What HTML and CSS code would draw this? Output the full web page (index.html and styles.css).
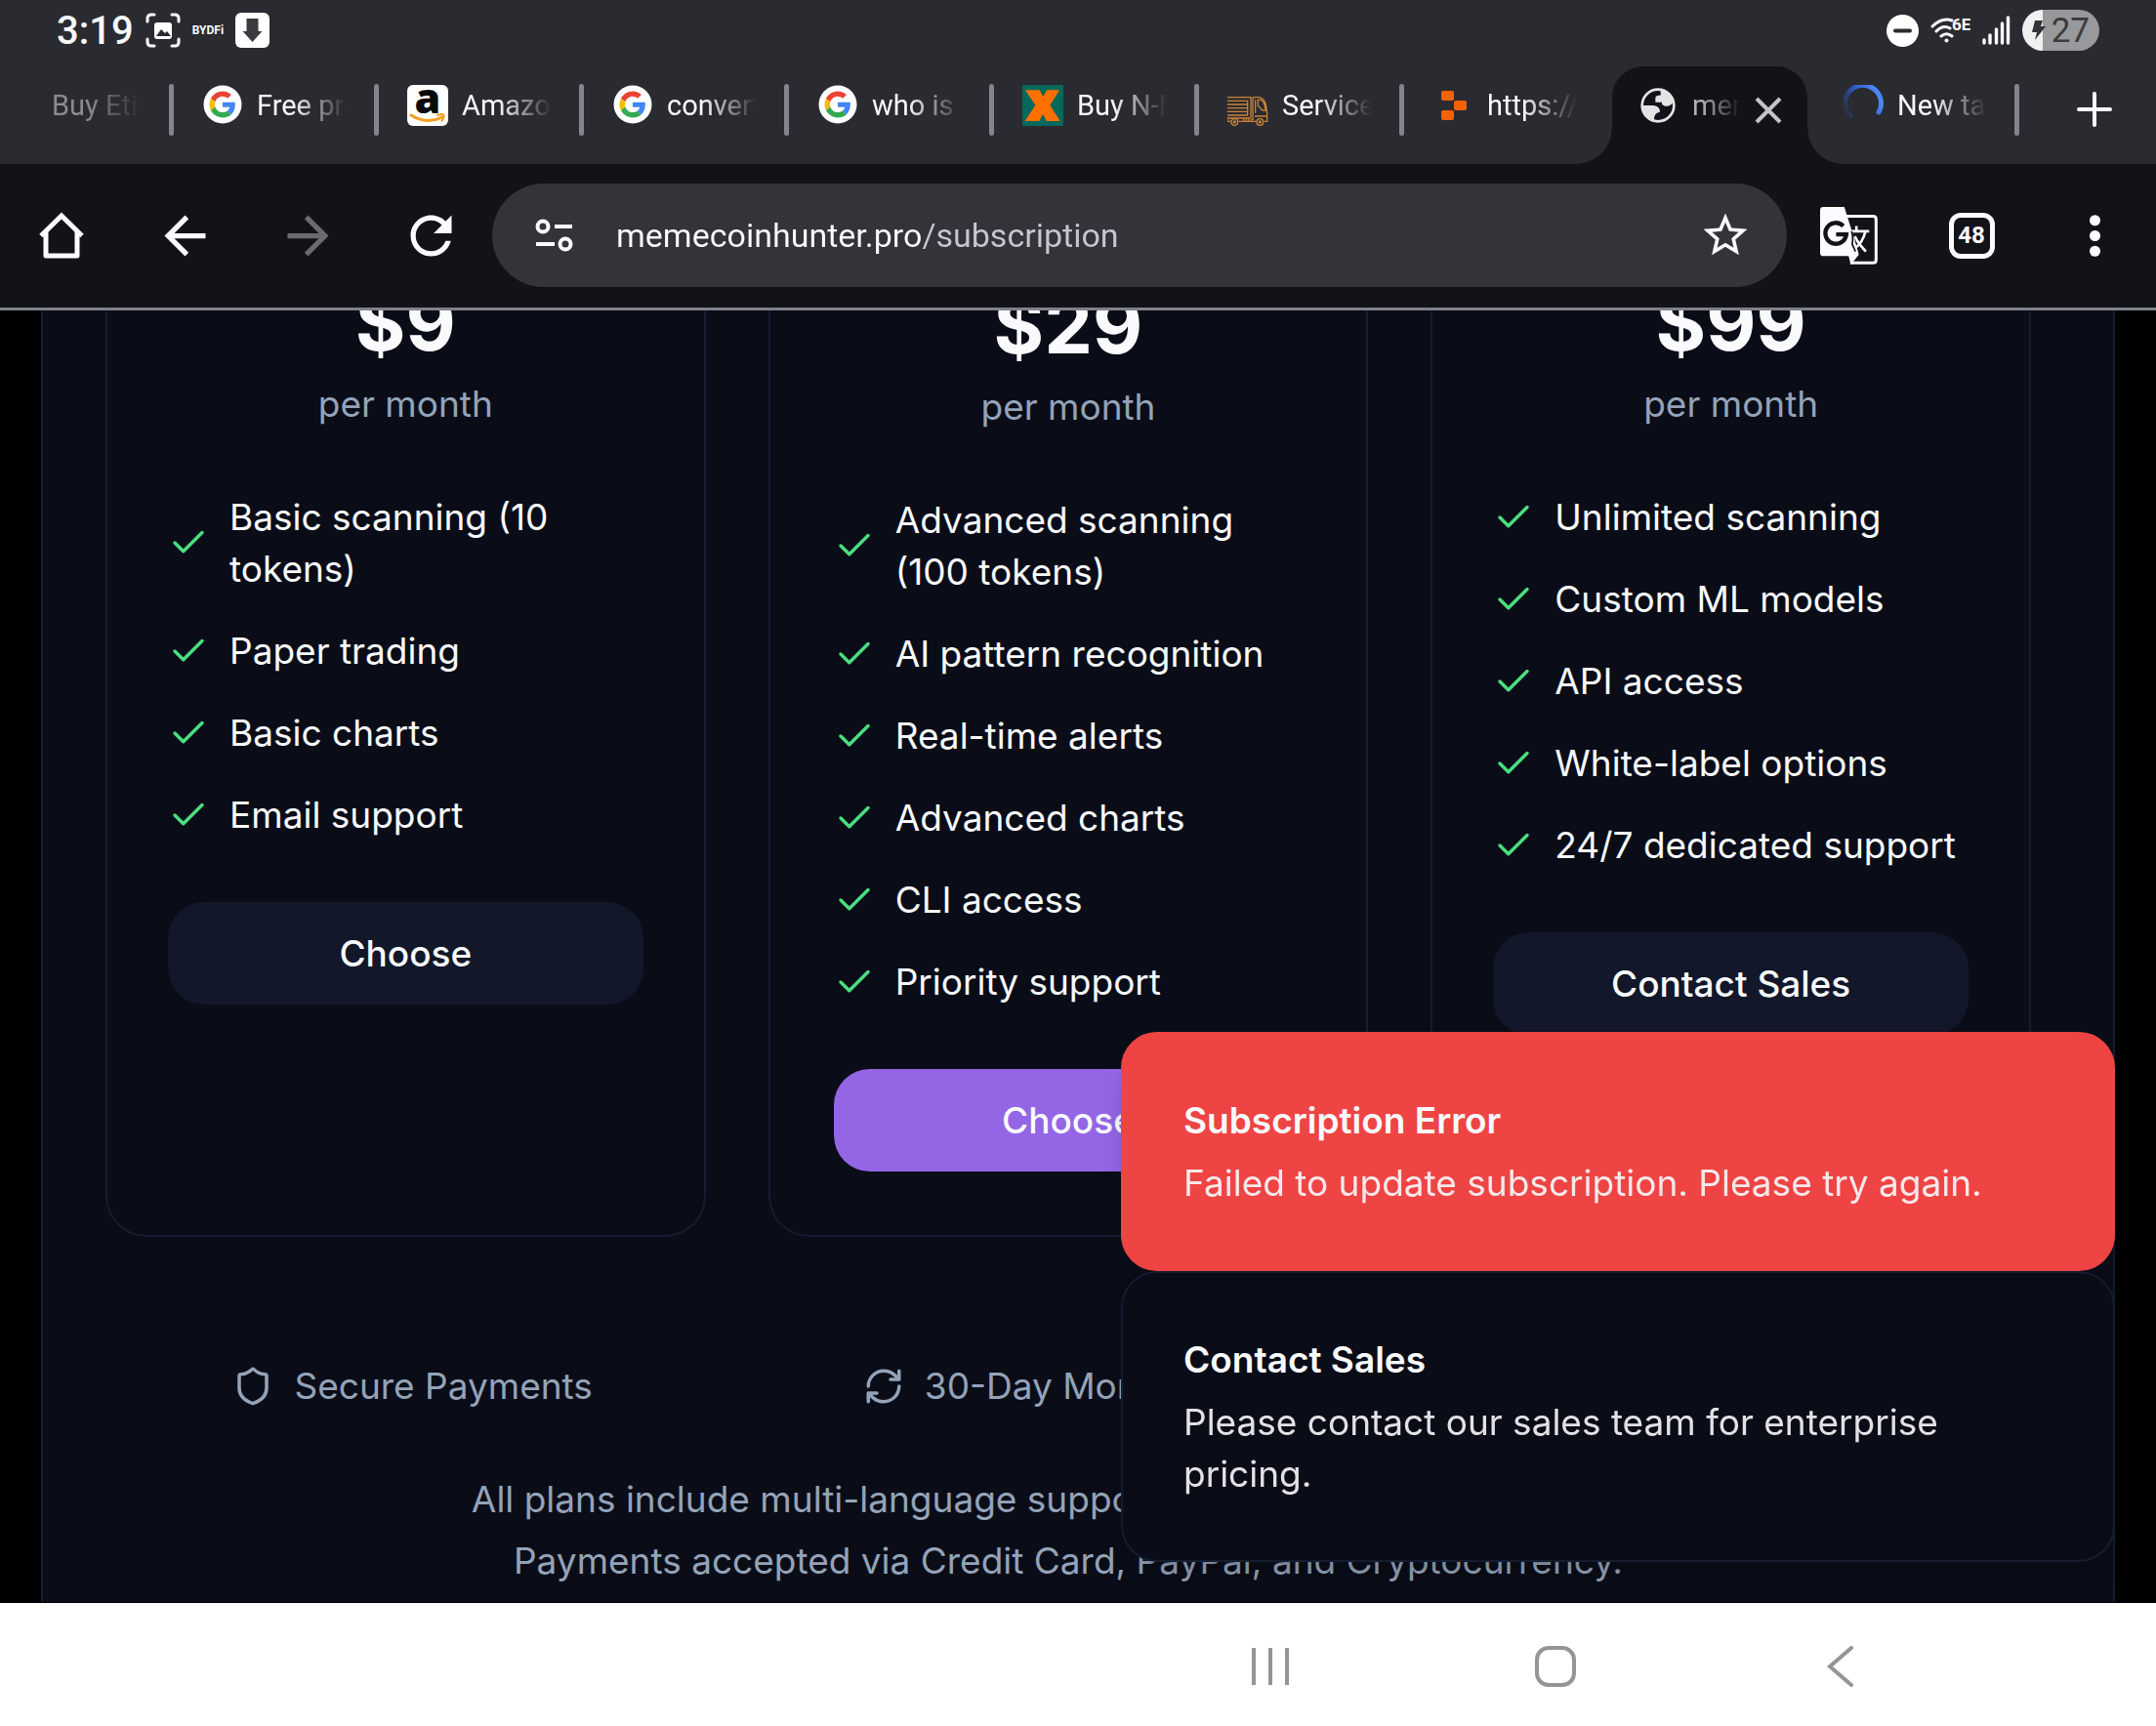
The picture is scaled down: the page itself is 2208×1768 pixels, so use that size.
FILE: index.html
```html
<!DOCTYPE html>
<html lang="en">
<head>
<meta charset="utf-8">
<meta name="viewport" content="width=device-width, initial-scale=1">
<title>Subscription</title>
<link rel="stylesheet" href="styles.css">
</head>
<body>
<svg width="0" height="0" class="defs" aria-hidden="true">
  <symbol id="google" viewBox="0 0 42 42">
    <circle cx="21" cy="20" r="19.500" fill="#fff"/>
    <g transform="translate(7.500 6.500) scale(.56)">
      <path fill="#EA4335" d="M24 9.500c3.540 0 6.710 1.220 9.210 3.600l6.850-6.850C35.900 2.380 30.470 0 24 0 14.620 0 6.510 5.380 2.560 13.220l7.980 6.190C12.430 13.720 17.740 9.500 24 9.500z"/>
      <path fill="#4285F4" d="M46.980 24.550c0-1.570-.15-3.090-.38-4.550H24v9.020h12.940c-.58 2.960-2.260 5.480-4.780 7.180l7.730 6c4.510-4.180 7.090-10.360 7.090-17.650z"/>
      <path fill="#FBBC05" d="M10.530 28.590c-.48-1.450-.76-2.990-.76-4.590s.27-3.140.76-4.590l-7.980-6.190C.92 16.460 0 20.120 0 24c0 3.880.92 7.540 2.560 10.780l7.970-6.190z"/>
      <path fill="#34A853" d="M24 48c6.480 0 11.930-2.130 15.890-5.810l-7.730-6c-2.150 1.450-4.920 2.300-8.160 2.300-6.260 0-11.570-4.220-13.470-9.910l-7.980 6.190C6.510 42.620 14.620 48 24 48z"/>
    </g>
  </symbol>
  <symbol id="check" viewBox="0 0 24 24">
    <path d="M20 6 9 17l-5-5" fill="none" stroke="currentColor" stroke-width="2" stroke-linecap="round" stroke-linejoin="round"/>
  </symbol>
</svg>

<header class="status">
  <div class="status-side">
    <time class="clock">3:19</time>
    <svg width="36" height="36" viewBox="0 0 36 36" fill="none" stroke="#fff" stroke-width="3" stroke-linecap="round">
      <path d="M2 9V6q0-4 4-4h3M27 2h3q4 0 4 4v3M34 27v3q0 4-4 4h-3M9 34H6q-4 0-4-4v-3"/>
      <rect x="9" y="10" width="18" height="17" rx="3" fill="#fff" stroke="none"/>
      <path d="M11 24l5-7 4 4 2-2 4 5z" fill="#2a2b30" stroke="none"/>
    </svg>
    <span class="carrier">BYDFi</span>
    <svg width="35" height="36" viewBox="0 0 35 36">
      <rect width="35" height="36" rx="6" fill="#fff"/>
      <path d="M11.500 6h12v13h4L17.500 30l-10-11h4z" fill="#3b3b40"/>
    </svg>
  </div>
  <div class="status-side">
    <svg width="33" height="33" viewBox="0 0 33 33">
      <circle cx="16.500" cy="16.500" r="16.500" fill="#fff"/>
      <path d="M9 16.500h15" stroke="#2a2b30" stroke-width="4" stroke-linecap="round"/>
    </svg>
    <svg class="wifi" width="41" height="28" viewBox="0 0 41 28" fill="none" stroke="#fff" stroke-width="3" stroke-linecap="round">
      <path d="M2 10Q12 .5 22 4M6 15q7-7 14-3M11 20q5.500-4.500 11 0"/>
      <circle cx="16.500" cy="24.500" r="2" fill="#fff" stroke="none"/>
      <text x="22" y="14" fill="#fff" stroke="none" font-family="Roboto, sans-serif" font-weight="700" font-size="17">6E</text>
    </svg>
    <svg class="signal" width="29" height="30" viewBox="0 0 29 30" stroke="#fff" stroke-width="3.400" stroke-linecap="round">
      <path d="M2 28v-3M8 28v-8M14.500 28V14M20.500 28V8M26.500 28V2"/>
    </svg>
    <div class="battery">
      <svg width="16" height="22" viewBox="0 0 16 22"><path d="M4 1h8l-2 6h5L4 21l2-8H1z" fill="#333438"/></svg>
      <span>27</span>
    </div>
  </div>
</header>

<nav class="tabs" aria-label="Open tabs">
  <div class="tab tab-faded"><span class="favicon"></span><button class="tab-title">Buy Etih</button></div>
  <div class="tab"><svg class="favicon"><use href="#google"/></svg><button class="tab-title">Free pro</button></div>
  <div class="tab">
    <svg class="favicon" viewBox="0 0 42 42">
      <rect width="42" height="42" rx="6" fill="#fff"/>
      <text x="21" y="29" text-anchor="middle" font-family="Open Sans, sans-serif" font-weight="800" font-size="43" fill="#0a0a0a">a</text>
      <path d="M4 31q16 10 32 2" fill="none" stroke="#f79d1e" stroke-width="3" stroke-linecap="round"/>
      <path d="M31 31q6-2 6.500 0t-2 6" fill="none" stroke="#f79d1e" stroke-width="2" stroke-linecap="round"/>
    </svg>
    <button class="tab-title">Amazon</button>
  </div>
  <div class="tab"><svg class="favicon"><use href="#google"/></svg><button class="tab-title">convert</button></div>
  <div class="tab"><svg class="favicon"><use href="#google"/></svg><button class="tab-title">who is s</button></div>
  <div class="tab">
    <svg class="favicon" viewBox="0 0 126 126">
      <path d="M0 0h126v126H0z" fill="#04685b"/>
      <path d="M9 16h44l11 20 11-20h39L85 62l31 49H74L63 90 52 111H8l32-49z" fill="#ff7000"/>
    </svg>
    <button class="tab-title">Buy N-M</button>
  </div>
  <div class="tab">
    <svg class="favicon" viewBox="0 0 126 126" fill="none" stroke="#c98437" stroke-width="4">
      <path d="M0 38h72v62M0 49h62M0 60h62M0 71h62M0 82h62M0 93h62M62 49v44M0 102h72M78 38h18q16 2 22 22l4 28v24h-10M78 38v70M86 46v40M94 46h8q8 2 12 14l4 18h-10L94 64zM84 96h36M0 100v12h10M34 112h54"/>
      <circle cx="22" cy="114" r="10"/><circle cx="100" cy="114" r="10"/>
      <circle cx="22" cy="114" r="3"/><circle cx="100" cy="114" r="3"/>
      <path d="M50 104v8M58 104v8M66 104v8M74 104v8"/>
    </svg>
    <button class="tab-title">Service</button>
  </div>
  <div class="tab tab-plain">
    <svg class="favicon" viewBox="0 0 42 42" fill="#f26207">
      <rect x="9" y="6" width="13" height="10" rx="2"/><rect x="22" y="16" width="13" height="10" rx="2"/><rect x="9" y="26" width="13" height="10" rx="2"/>
    </svg>
    <button class="tab-title">https://</button>
  </div>
  <div class="tab tab-plain tab-active">
    <svg class="favicon" viewBox="111 263 126 126">
      <circle cx="174" cy="326" r="49" fill="none" stroke="#e3e3e3" stroke-width="8"/>
      <path d="M181 277l2 17q-17 2-17 8v14h20v6q12 12 28 2l8-10q-4-30-41-37zM125 326h35q20 2 20 20-18 2-18 24l-4 4q-34-10-33-48z" fill="#e3e3e3"/>
    </svg>
    <button class="tab-title">mem</button>
    <button class="tab-close" aria-label="Close tab">
      <svg width="28" height="28" viewBox="0 0 28 28"><path d="M2 2l24 24M26 2L2 26" stroke="#c3c3c8" stroke-width="4"/></svg>
    </button>
  </div>
  <div class="tab">
    <svg class="favicon" viewBox="0 0 42 42" fill="none" stroke-width="5" stroke-linecap="round">
      <defs><linearGradient id="spin" x1="0" y1="1" x2="1" y2=".6"><stop offset="0" stop-color="#2b4f9f" stop-opacity="0"/><stop offset=".5" stop-color="#2d56bb"/><stop offset="1" stop-color="#4a86f5"/></linearGradient></defs>
      <path d="M8 32A18.500 18.500 0 1 1 37 28" stroke="url(#spin)"/>
    </svg>
    <button class="tab-title">New tab</button>
  </div>
  <button class="tab-new" aria-label="New tab">
    <svg width="36" height="36" viewBox="0 0 36 36"><path d="M18 2v32M2 18h32" stroke="#fdfbff" stroke-width="4" stroke-linecap="round"/></svg>
  </button>
</nav>

<div class="toolbar">
  <button class="tool" aria-label="Home">
    <svg width="48" height="48" viewBox="0 0 48 48" fill="none" stroke="currentColor" stroke-width="5" stroke-linejoin="round"><path d="M3 24.500L24 4l21 20.500" stroke-linejoin="miter"/><path d="M8 20v25h32V20"/></svg>
  </button>
  <button class="tool" aria-label="Back">
    <svg width="63" height="63" viewBox="0 0 24 24"><path fill="currentColor" d="M20 11H7.830l5.590-5.590L12 4l-8 8 8 8 1.410-1.410L7.830 13H20v-2z"/></svg>
  </button>
  <button class="tool tool-off" aria-label="Forward">
    <svg width="63" height="63" viewBox="0 0 24 24"><path fill="currentColor" d="M12 4l-1.410 1.410L16.170 11H4v2h12.170l-5.580 5.590L12 20l8-8z"/></svg>
  </button>
  <button class="tool" aria-label="Reload">
    <svg width="63" height="63" viewBox="0 0 24 24"><path fill="currentColor" d="M17.650 6.350C16.200 4.900 14.210 4 12 4c-4.420 0-7.990 3.580-7.990 8s3.570 8 7.990 8c3.730 0 6.840-2.550 7.730-6h-2.080c-.82 2.330-3.040 4-5.650 4-3.310 0-6-2.690-6-6s2.690-6 6-6c1.660 0 3.140.69 4.220 1.780L13 11h7V4l-2.350 2.350z"/></svg>
  </button>
  <div class="omnibox">
    <svg width="40" height="34" viewBox="0 0 40 34" fill="none" stroke="#fdfbff" stroke-width="4"><circle cx="8" cy="8" r="5.500"/><path d="M20 8h18M1 26h19"/><circle cx="31" cy="26" r="5.500"/></svg>
    <input class="url" type="text" aria-label="Address" value="memecoinhunter.pro/subscription">
    <button class="star" aria-label="Bookmark">
      <svg width="54" height="54" viewBox="0 0 24 24"><path fill="currentColor" d="M22 9.240l-7.190-.62L12 2 9.190 8.630 2 9.240l5.460 4.730L5.820 21 12 17.270 18.180 21l-1.630-7.030L22 9.240zM12 15.400l-3.760 2.270 1-4.280-3.320-2.880 4.380-.38L12 6.100l1.710 4.040 4.380.38-3.320 2.880 1 4.280L12 15.400z"/></svg>
    </button>
  </div>
  <button class="tool" aria-label="Translate">
    <svg width="59" height="59" viewBox="0 0 176 176" fill="none" stroke="currentColor">
      <path d="M76 28h86q9 0 9 9v125q0 9-9 9H92" stroke-width="9"/>
      <path d="M111 58v14M90 74h60M138 76q-8 34-34 52M106 90q10 22 34 46" stroke-width="8"/>
      <path d="M10 0h64l22 70q22 70 22 76L94 176l-7-26H10q-10 0-10-10V10Q0 0 10 0z" fill="currentColor" stroke="none"/>
      <path d="M96 74q6 20 2 40l10 22" stroke="#121318" stroke-width="5"/>
      <path d="M71 58A32 32 0 1 0 80 84H49" stroke="#121318" stroke-width="13"/>
    </svg>
  </button>
  <button class="tool" aria-label="Switch tabs"><span class="count">48</span></button>
  <button class="tool" aria-label="Menu">
    <svg width="63" height="63" viewBox="0 0 24 24" fill="currentColor"><circle cx="12" cy="6" r="2.100"/><circle cx="12" cy="12" r="2.100"/><circle cx="12" cy="18" r="2.100"/></svg>
  </button>
</div>

<main class="page">
  <section class="panel">
    <div class="plans">
      <article class="plan">
        <p class="price">$9</p>
        <p class="period">per month</p>
        <ul class="features">
          <li><svg><use href="#check"/></svg>Basic scanning (10 tokens)</li>
          <li><svg><use href="#check"/></svg>Paper trading</li>
          <li><svg><use href="#check"/></svg>Basic charts</li>
          <li><svg><use href="#check"/></svg>Email support</li>
        </ul>
        <button class="choose">Choose</button>
      </article>
      <article class="plan plan-popular">
        <p class="price">$29</p>
        <p class="period">per month</p>
        <ul class="features">
          <li><svg><use href="#check"/></svg>Advanced scanning (100 tokens)</li>
          <li><svg><use href="#check"/></svg>AI pattern recognition</li>
          <li><svg><use href="#check"/></svg>Real-time alerts</li>
          <li><svg><use href="#check"/></svg>Advanced charts</li>
          <li><svg><use href="#check"/></svg>CLI access</li>
          <li><svg><use href="#check"/></svg>Priority support</li>
        </ul>
        <button class="choose choose-primary">Choose</button>
      </article>
      <article class="plan">
        <p class="price">$99</p>
        <p class="period">per month</p>
        <ul class="features">
          <li><svg><use href="#check"/></svg>Unlimited scanning</li>
          <li><svg><use href="#check"/></svg>Custom ML models</li>
          <li><svg><use href="#check"/></svg>API access</li>
          <li><svg><use href="#check"/></svg>White-label options</li>
          <li><svg><use href="#check"/></svg>24/7 dedicated support</li>
        </ul>
        <button class="choose">Contact Sales</button>
      </article>
    </div>
    <div class="perks">
      <div class="perk">
        <svg viewBox="0 0 24 24"><path d="M20 13c0 5-3.500 7.500-7.660 8.950a1 1 0 0 1-.67-.01C7.500 20.500 4 18 4 13V6a1 1 0 0 1 1-1c2 0 4.500-1.200 6.240-2.720a1.170 1.170 0 0 1 1.520 0C14.510 3.810 17 5 19 5a1 1 0 0 1 1 1z"/></svg>
        Secure Payments
      </div>
      <div class="perk">
        <svg viewBox="0 0 24 24"><path d="M3 12a9 9 0 0 1 9-9 9.750 9.750 0 0 1 6.740 2.740L21 8M21 3v5h-5M21 12a9 9 0 0 1-9 9 9.750 9.750 0 0 1-6.740-2.740L3 16M8 16H3v5"/></svg>
        30-Day Money Back
      </div>
    </div>
    <p class="note">All plans include multi-language support and real-time market signals.</p>
    <p class="note">Payments accepted via Credit Card, PayPal, and Cryptocurrency.</p>
  </section>
  <div class="toasts">
    <div class="toast toast-error" role="alert">
      <h2>Subscription Error</h2>
      <p>Failed to update subscription. Please try again.</p>
    </div>
    <div class="toast" role="status">
      <h2>Contact Sales</h2>
      <p>Please contact our sales team for enterprise pricing.</p>
    </div>
  </div>
</main>

<footer class="system">
  <button aria-label="Recents"><svg width="42" height="42" viewBox="0 0 42 42"><path d="M4 2v38M21 2v38M38 2v38"/></svg></button>
  <button aria-label="Home screen"><svg width="42" height="42" viewBox="0 0 42 42"><rect x="2" y="2" width="38" height="38" rx="12"/></svg></button>
  <button aria-label="System back"><svg width="42" height="42" viewBox="0 0 42 42"><path d="M32 2L10 21l22 19" stroke-linecap="round"/></svg></button>
</footer>
</body>
</html>
```

FILE: styles.css
```css
* { box-sizing: border-box; }

body {
  margin: 0;
  min-height: 100vh;
  display: flex;
  flex-direction: column;
  background: #fff;
  color: #f8fafc;
  font-family: Inter, sans-serif;
  font-size: 37px;
  line-height: 53px;
}

h2, p, ul { margin: 0; padding: 0; }

button, input {
  margin: 0;
  padding: 0;
  border: 0;
  background: none;
  color: inherit;
  font: inherit;
}

svg { display: block; flex: none; }
.defs { position: absolute; }

/* status bar */
.status {
  display: flex;
  justify-content: space-between;
  height: 64px;
  padding: 0 58px 2px;
  background: #2a2b30;
  font-family: Roboto, sans-serif;
}
.status-side { display: flex; align-items: center; gap: 12px; }
.clock { font-size: 40px; font-weight: 500; }
.carrier { font-size: 12px; font-weight: 700; }
.battery {
  display: flex;
  align-items: center;
  gap: 5px;
  height: 42px;
  padding: 0 10px 0 9px;
  border-radius: 21px;
  background: linear-gradient(90deg, #f0f0f0 21px, #98999b 21px);
  color: #3a3b3f;
  font-size: 35px;
}

/* tab strip */
.tabs {
  display: flex;
  height: 104px;
  padding-top: 4px;
  background: #2a2b30;
  overflow: hidden;
  font-family: Roboto, sans-serif;
  font-size: 29px;
}
.tab {
  position: relative;
  z-index: 0;
  flex: none;
  display: flex;
  align-items: center;
  gap: 14px;
  width: 210px;
  padding: 0 0 20px 31px;
}
.tab:first-child { margin-left: -34px; }
.tab::after {
  content: "";
  position: absolute;
  right: -2px;
  bottom: 29px;
  width: 5px;
  height: 53px;
  border-radius: 3px;
  background: #83848d;
}
.tab-faded .tab-title { color: #8b8b90; }
.favicon { flex: none; width: 42px; height: 42px; }
.tab-title {
  width: 92px;
  overflow: hidden;
  white-space: nowrap;
  text-align: left;
  -webkit-mask-image: linear-gradient(90deg, #000 40%, transparent);
  mask-image: linear-gradient(90deg, #000 40%, transparent);
}
.tab-plain::after { content: none; }
.tab-active::before {
  content: "";
  position: absolute;
  z-index: -1;
  inset: 0 5px;
  border-radius: 32px 32px 0 0;
  background: #121318;
}
.tab-active::after {
  content: "";
  z-index: -1;
  left: -31px;
  right: -31px;
  bottom: 0;
  width: auto;
  height: 36px;
  border-radius: 0;
  background:
    radial-gradient(circle at 0 0, transparent 35px, #121318 36px) left / 36px 36px no-repeat,
    radial-gradient(circle at 100% 0, transparent 35px, #121318 36px) right / 36px 36px no-repeat;
}
.tab-active .tab-title {
  width: 50px;
  color: #b0b0b5;
  -webkit-mask-image: linear-gradient(90deg, #000 20%, transparent);
  mask-image: linear-gradient(90deg, #000 20%, transparent);
}
.tab-close { padding-top: 10px; }
.tab-new { flex: none; display: grid; place-items: center; width: 158px; padding-bottom: 12px; }

/* toolbar */
.toolbar {
  display: flex;
  align-items: center;
  height: 150px;
  padding-bottom: 1px;
  border-bottom: 3px solid #7f818b;
  background: #121318;
  color: #fdfbff;
}
.tool { flex: none; display: grid; place-items: center; width: 126px; height: 126px; }
.tool-off { color: #6a6a6f; }
.omnibox {
  flex: 1;
  display: flex;
  align-items: center;
  gap: 43px;
  height: 106px;
  padding: 0 36px 0 44px;
  border-radius: 53px;
  background: #333439;
}
.url {
  flex: 1;
  min-width: 0;
  font-family: Roboto, sans-serif;
  font-size: 34px;
  color: transparent;
  background: linear-gradient(90deg, #fdfbff 314px, #c5c6d0 314px);
  -webkit-background-clip: text;
  background-clip: text;
}
.count {
  display: grid;
  place-items: center;
  width: 47px;
  height: 47px;
  border: 5px solid #fdfbff;
  border-radius: 12px;
  font: 700 24px/24px Roboto, sans-serif;
}

/* page */
.page {
  position: relative;
  flex: 1;
  overflow: hidden;
  padding: 0 42px;
  background: #000103;
}
.panel {
  min-height: 100%;
  padding: 0 84px 16px 64px;
  border: solid #141d30;
  border-width: 0 2px;
  background: #0a0d18;
}
.plans {
  display: grid;
  grid-template-columns: repeat(3, 1fr);
  gap: 64px;
  margin-top: -99px;
}
.plan {
  padding: 62px;
  border: 2px solid #141d30;
  border-radius: 42px;
}
.plan-popular { padding: 65px; }
.price {
  margin-bottom: 9px;
  font-size: 79px;
  font-weight: 700;
  line-height: 95px;
  text-align: center;
}
.period { color: #94a3b8; text-align: center; }
.features {
  display: grid;
  gap: 31px;
  margin: 63px 0;
  list-style: none;
}
.features li { display: flex; align-items: center; gap: 21px; }
.features svg { width: 42px; height: 42px; color: #4ade80; }
.choose {
  display: block;
  width: 100%;
  height: 105px;
  border-radius: 37px;
  background: #12172a;
  font-weight: 500;
}
.choose-primary { background: #9466e6; }

.perks {
  display: grid;
  grid-template-columns: repeat(3, 1fr);
  gap: 42px;
  margin: 126px 0 63px;
  color: #94a3b8;
}
.perk { display: flex; align-items: center; justify-content: center; gap: 21px; }
.perk svg {
  width: 42px;
  height: 42px;
  fill: none;
  stroke: currentColor;
  stroke-width: 2;
  stroke-linecap: round;
  stroke-linejoin: round;
}
.note { margin-top: 10px; color: #94a3b8; text-align: center; }

/* notifications */
.toasts { position: absolute; right: 42px; bottom: 42px; width: 1018px; }
.toast {
  padding: 62px;
  border: 2px solid #141d30;
  border-radius: 37px;
  background: #0a0d18;
  box-shadow: 0 20px 30px -8px rgba(0, 0, 0, .2);
}
.toast h2 { margin-bottom: 11px; font-size: 37px; font-weight: 600; }
.toast p { opacity: .9; }
.toast-error { border-color: #ef4444; background: #ef4444; }

/* system navigation */
.system {
  display: flex;
  justify-content: flex-end;
  height: 126px;
  padding: 0 177px 4px 0;
}
.system button { display: grid; place-items: center; width: 292px; padding-top: 8px; }
.system svg { fill: none; stroke: #959595; stroke-width: 4; }
```
